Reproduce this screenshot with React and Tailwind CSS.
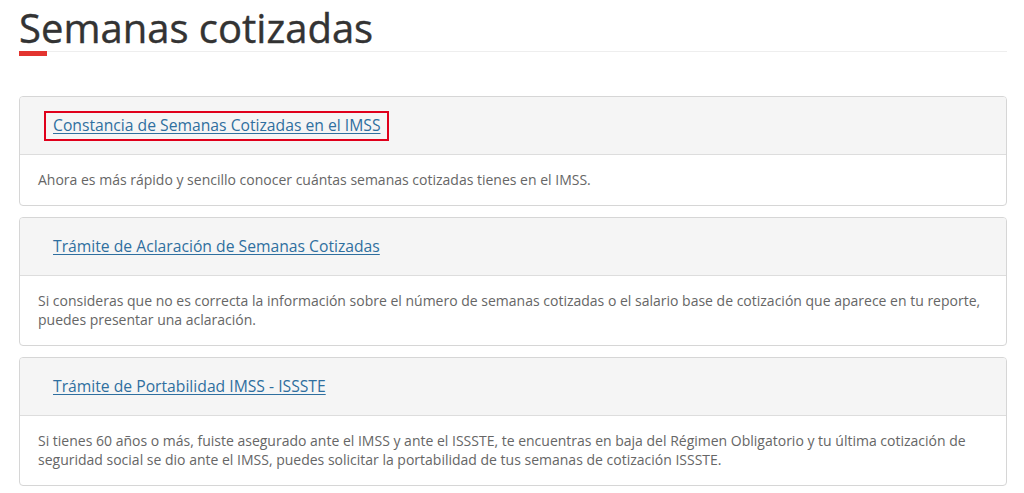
import React from "react";

const items = [
  {
    title: "Constancia de Semanas Cotizadas en el IMSS",
    text: "Ahora es más rápido y sencillo conocer cuántas semanas cotizadas tienes en el IMSS.",
    highlight: true,
  },
  {
    title: "Trámite de Aclaración de Semanas Cotizadas",
    text: "Si consideras que no es correcta la información sobre el número de semanas cotizadas o el salario base de cotización que aparece en tu reporte, puedes presentar una aclaración.",
  },
  {
    title: "Trámite de Portabilidad IMSS - ISSSTE",
    text: "Si tienes 60 años o más, fuiste asegurado ante el IMSS y ante el ISSSTE, te encuentras en baja del Régimen Obligatorio y tu última cotización de seguridad social se dio ante el IMSS, puedes solicitar la portabilidad de tus semanas de cotización ISSSTE.",
  },
];

const App = () => {
  return (
    <div
      className="min-h-screen w-full bg-white pl-[19px] pr-[17px]"
      style={{ fontFamily: '"Open Sans", sans-serif' }}
    >
      <div className="relative border-b border-[#eeeeee]">
        <h1 className="text-[40px] leading-[46px] text-[#333333] pt-[5px] [-webkit-text-stroke:0.4px_#333333]">
          Semanas cotizadas
        </h1>
        <div className="absolute left-0 -bottom-[5px] w-[28px] h-[5px] bg-[#e3342f]" />
      </div>

      <div className="mt-[44px] flex flex-col gap-[11px]">
        {items.map((item) => (
          <div
            key={item.title}
            className="rounded-[4px] border border-[#d6d6d6] bg-white overflow-hidden"
          >
            <div className="h-[58px] bg-[#f5f5f5] border-b border-[#dddddd] flex items-center pl-[24px]">
              <div
                className={
                  item.highlight
                    ? "border-2 border-[#e0001b] px-[7px] h-[30px] flex items-center"
                    : "border-2 border-transparent px-[7px] h-[30px] flex items-center"
                }
              >
                <a
                  href="#"
                  className="text-[15.7px] text-[#2f6f9f] underline underline-offset-2 decoration-1"
                >
                  {item.title}
                </a>
              </div>
            </div>
            <div className="pl-[18px] pr-[14px] pt-[15px] pb-[16px] text-[14px] leading-[19px] text-[#666666]">
              {item.text}
            </div>
          </div>
        ))}
      </div>
    </div>
  );
};

export default App;
